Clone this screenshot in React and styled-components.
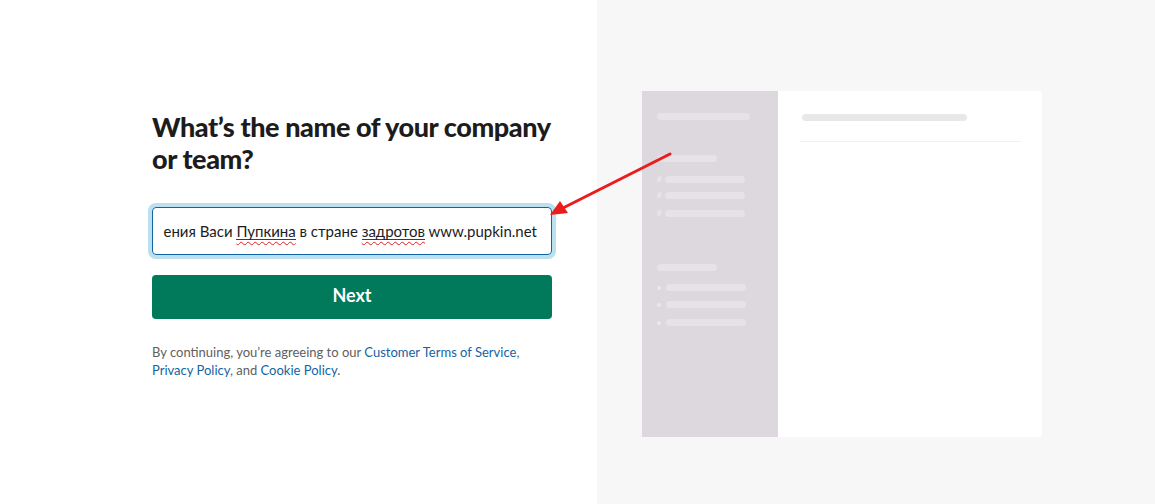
import React from "react"
import styled, { createGlobalStyle } from "styled-components"

const GlobalStyle = createGlobalStyle`
    html, body {
        margin: 0;
        padding: 0;
        background: #fff;
    }
    body {
        font-family: Lato, "Noto Sans", "Liberation Sans", sans-serif;
    }
`;

const Page = styled.div`
    position: relative;
    display: grid;
    grid-template-columns: 597px 1fr;
    width: 1155px;
    height: 504px;
    overflow: hidden;
`;

const FormSide = styled.div`
    background: #fff;
    padding: 111px 0 0 152px;
`;

const Form = styled.div`
    width: 400px;
    display: flex;
    flex-direction: column;
`;

const Title = styled.h1`
    margin: 0;
    font-size: 27px;
    line-height: 32px;
    font-weight: 900;
    color: #1d1c1d;
    letter-spacing: -0.4px;
    white-space: nowrap;
`;

const Field = styled.div`
    margin-top: 32px;
    height: 48px;
    box-sizing: border-box;
    border: 1px solid #1264a3;
    border-radius: 4px;
    box-shadow: 0 0 0 4px rgba(29, 155, 209, 0.3);
    display: flex;
    align-items: center;
    justify-content: flex-end;
    padding: 0 14px 0 12px;
    overflow: hidden;
    white-space: nowrap;
    font-size: 15px;
    color: #1d1c1d;
`;

const Typo = styled.span`
    display: inline-block;
    line-height: 16px;
    border-bottom: 1px solid #3a3a3a;
    text-decoration: underline wavy #e01e1e;
    text-decoration-thickness: 1px;
    text-underline-offset: 4px;
`;

const NextButton = styled.button`
    margin-top: 20px;
    height: 44px;
    padding: 0 0 4px;
    border: none;
    border-radius: 4px;
    background: #007a5a;
    color: #fff;
    font-family: inherit;
    font-size: 18px;
    font-weight: 700;
    cursor: pointer;
`;

const Legal = styled.p`
    margin: 24px 0 0;
    font-size: 13px;
    line-height: 18px;
    color: #616061;
`;

const Link = styled.a`
    color: #1264a3;
    text-decoration: none;
`;

const PreviewSide = styled.div`
    background: #f7f7f7;
    padding: 91px 0 0 45px;
`;

const Card = styled.div`
    width: 400px;
    height: 346px;
    display: flex;
    background: #fff;
    border-radius: 0 3px 3px 0;
    overflow: hidden;
`;

const Sidebar = styled.div`
    width: 136px;
    background: #ddd8de;
    padding: 22px 0 0 15px;
    box-sizing: border-box;
    display: flex;
    flex-direction: column;
`;

const Bar = styled.div`
    flex-shrink: 0;
    height: 7px;
    border-radius: 4px;
    width: ${(p) => p.$w}px;
    margin-top: ${(p) => p.$mt || 0}px;
    background: ${(p) => p.$c || "#e6e2e7"};
`;

const Row = styled.div`
    display: flex;
    align-items: center;
    height: 7px;
    margin-top: ${(p) => p.$mt}px;
`;

const Hash = styled.span`
    width: 8px;
    font-size: 8px;
    line-height: 7px;
    font-weight: 700;
    color: #ebe7ec;
`;

const Dot = styled.span`
    width: 4px;
    height: 4px;
    border-radius: 50%;
    background: #ebe7ec;
    margin: 0 5px 0 0;
`;

const Main = styled.div`
    flex: 1;
    padding: 23px 21px 0 24px;
    display: flex;
    flex-direction: column;
`;

const Divider = styled.div`
    margin-top: 20px;
    margin-left: -2px;
    height: 1px;
    background: #f0f0f0;
`;

const Arrow = styled.svg`
    position: absolute;
    left: 0;
    top: 0;
    pointer-events: none;
`;

const channels = [14, 9, 11];
const messages = [13, 10, 11];

export default function App() {
    return (
        <>
            <GlobalStyle />
            <Page>
                <FormSide>
                    <Form>
                        <Title>
                            What’s the name of your company
                            <br />
                            or team?
                        </Title>
                        <Field>
                            ения Васи&nbsp;<Typo>Пупкина</Typo>&nbsp;в стране&nbsp;<Typo>задротов</Typo>&nbsp;www.pupkin.net
                        </Field>
                        <NextButton>Next</NextButton>
                        <Legal>
                            By continuing, you’re agreeing to our <Link>Customer Terms of Service</Link>,{" "}
                            <Link>Privacy Policy</Link>, and <Link>Cookie Policy</Link>.
                        </Legal>
                    </Form>
                </FormSide>
                <PreviewSide>
                    <Card>
                        <Sidebar>
                            <Bar $w={93} />
                            <Bar $w={60} $mt={35} />
                            {channels.map((mt, i) => (
                                <Row key={"c" + i} $mt={mt}>
                                    <Hash>#</Hash>
                                    <Bar $w={80} />
                                </Row>
                            ))}
                            <Bar $w={60} $mt={47} />
                            {messages.map((mt, i) => (
                                <Row key={"m" + i} $mt={mt}>
                                    <Dot />
                                    <Bar $w={80} />
                                </Row>
                            ))}
                        </Sidebar>
                        <Main>
                            <Bar $w={165} $c="#e8e8e8" />
                            <Divider />
                        </Main>
                    </Card>
                </PreviewSide>
                <Arrow width="1155" height="504" viewBox="0 0 1155 504">
                    <line x1="670" y1="154" x2="563" y2="208" stroke="#ec1c1c" strokeWidth="3" strokeLinecap="round" />
                    <polygon points="550,215 560,201 568,213" fill="#ec1c1c" />
                </Arrow>
            </Page>
        </>
    );
}
